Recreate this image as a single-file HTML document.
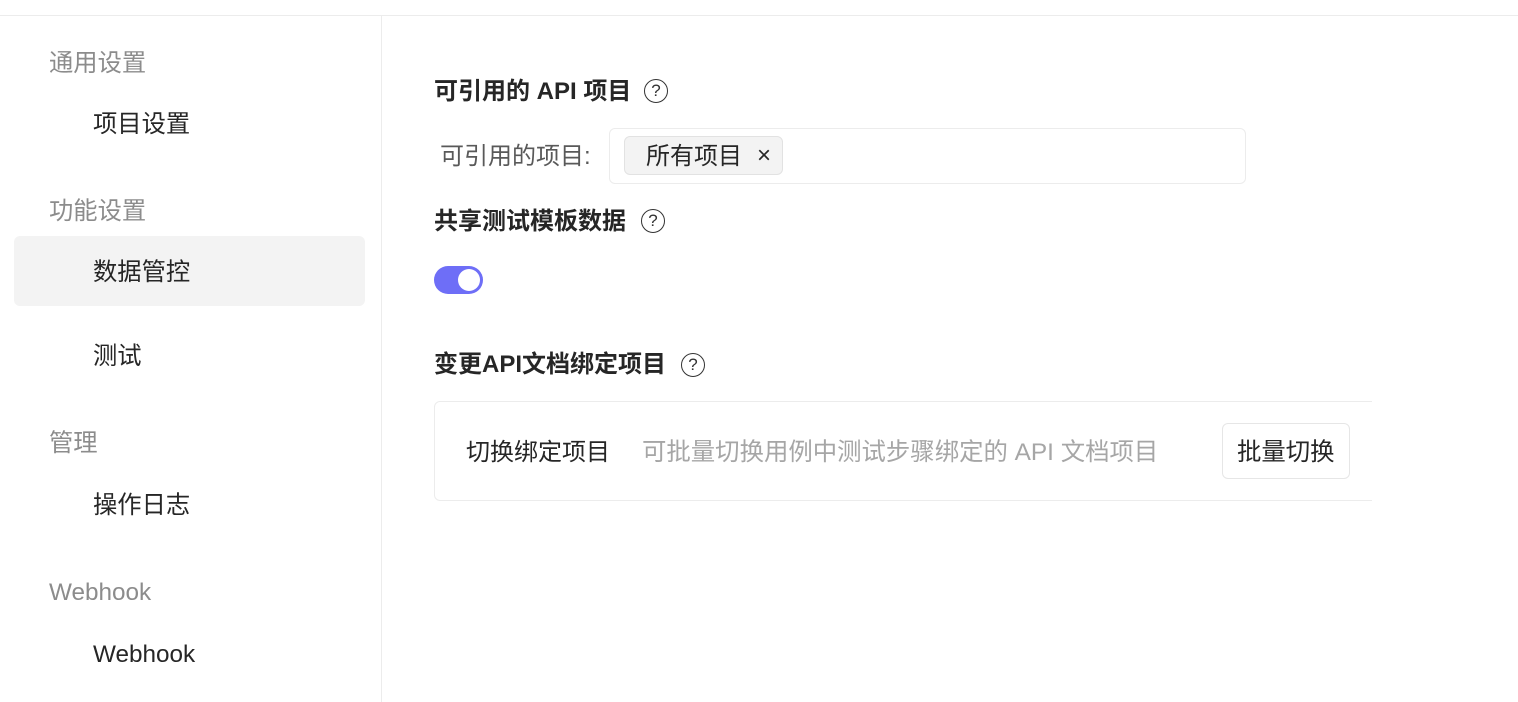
<!DOCTYPE html>
<html><head><meta charset="utf-8"><style>
*{margin:0;padding:0;box-sizing:border-box}
body{width:1518px;height:702px;background:#fff;font-family:"Liberation Sans","Noto Sans CJK SC",sans-serif;color:#262626;position:relative;overflow:hidden}
.top{position:absolute;left:0;top:15px;width:1518px;height:1px;background:#ececec}
.side{position:absolute;left:381px;top:16px;width:1px;height:686px;background:#ececec}
.t{position:absolute;white-space:nowrap;line-height:1}
.g{color:#8c8c8c;font-size:24.3px;left:49px}
.i{font-size:24.3px;left:93px;color:#262626}
.sel{position:absolute;left:14px;top:236px;width:351px;height:70px;background:#f3f3f3;border-radius:6px}
.h{font-size:24px;font-weight:bold;left:434px;color:#262626}
.q{position:absolute;width:24px;height:24px;border:1.6px solid #333;border-radius:50%;font-size:17px;text-align:center;line-height:21px;font-weight:normal;color:#333}
</style></head><body>
<div class="top"></div><div class="side"></div>
<div class="t g" style="top:52px">通用设置</div>
<div class="t i" style="top:113px">项目设置</div>
<div class="t g" style="top:200px">功能设置</div>
<div class="sel"></div>
<div class="t i" style="top:261px">数据管控</div>
<div class="t i" style="top:345px">测试</div>
<div class="t g" style="top:432px">管理</div>
<div class="t i" style="top:494px">操作日志</div>
<div class="t g" style="top:581px">Webhook</div>
<div class="t i" style="top:643px">Webhook</div>

<div class="t h" style="top:80px">可引用的 API 项目</div>
<div class="q" style="left:644px;top:79px">?</div>
<div class="t" style="left:440px;top:145px;font-size:24px;color:#595959">可引用的项目:</div>
<div style="position:absolute;left:609px;top:128px;width:637px;height:56px;border:1px solid #ececec;border-radius:6px"></div>
<div style="position:absolute;left:624px;top:136px;width:159px;height:39px;background:#f3f3f3;border:1px solid #e2e2e2;border-radius:6px"></div>
<div class="t" style="left:646px;top:145px;font-size:24px">所有项目</div>
<div class="t" style="left:757px;top:144px;font-size:24px">×</div>

<div class="t h" style="top:210px">共享测试模板数据</div>
<div class="q" style="left:641px;top:209px">?</div>
<div style="position:absolute;left:434px;top:266px;width:49px;height:28px;background:#6e6ef7;border-radius:14px"></div>
<div style="position:absolute;left:458px;top:269px;width:22px;height:22px;background:#fff;border-radius:50%"></div>

<div class="t h" style="top:353px">变更API文档绑定项目</div>
<div class="q" style="left:681px;top:353px">?</div>
<div style="position:absolute;left:434px;top:401px;width:945px;height:100px;border:1px solid #ececec;border-radius:6px"></div>
<div style="position:absolute;left:1372px;top:400px;width:20px;height:102px;background:#fff"></div>
<div class="t" style="left:466px;top:441px;font-size:24px">切换绑定项目</div>
<div class="t" style="left:642px;top:441px;font-size:24.4px;color:#a6a6a6">可批量切换用例中测试步骤绑定的 API 文档项目</div>
<div style="position:absolute;left:1222px;top:423px;width:128px;height:56px;border:1px solid #e6e6e6;border-radius:6px"></div>
<div class="t" style="left:1237px;top:441px;font-size:24.4px">批量切换</div>
</body></html>
